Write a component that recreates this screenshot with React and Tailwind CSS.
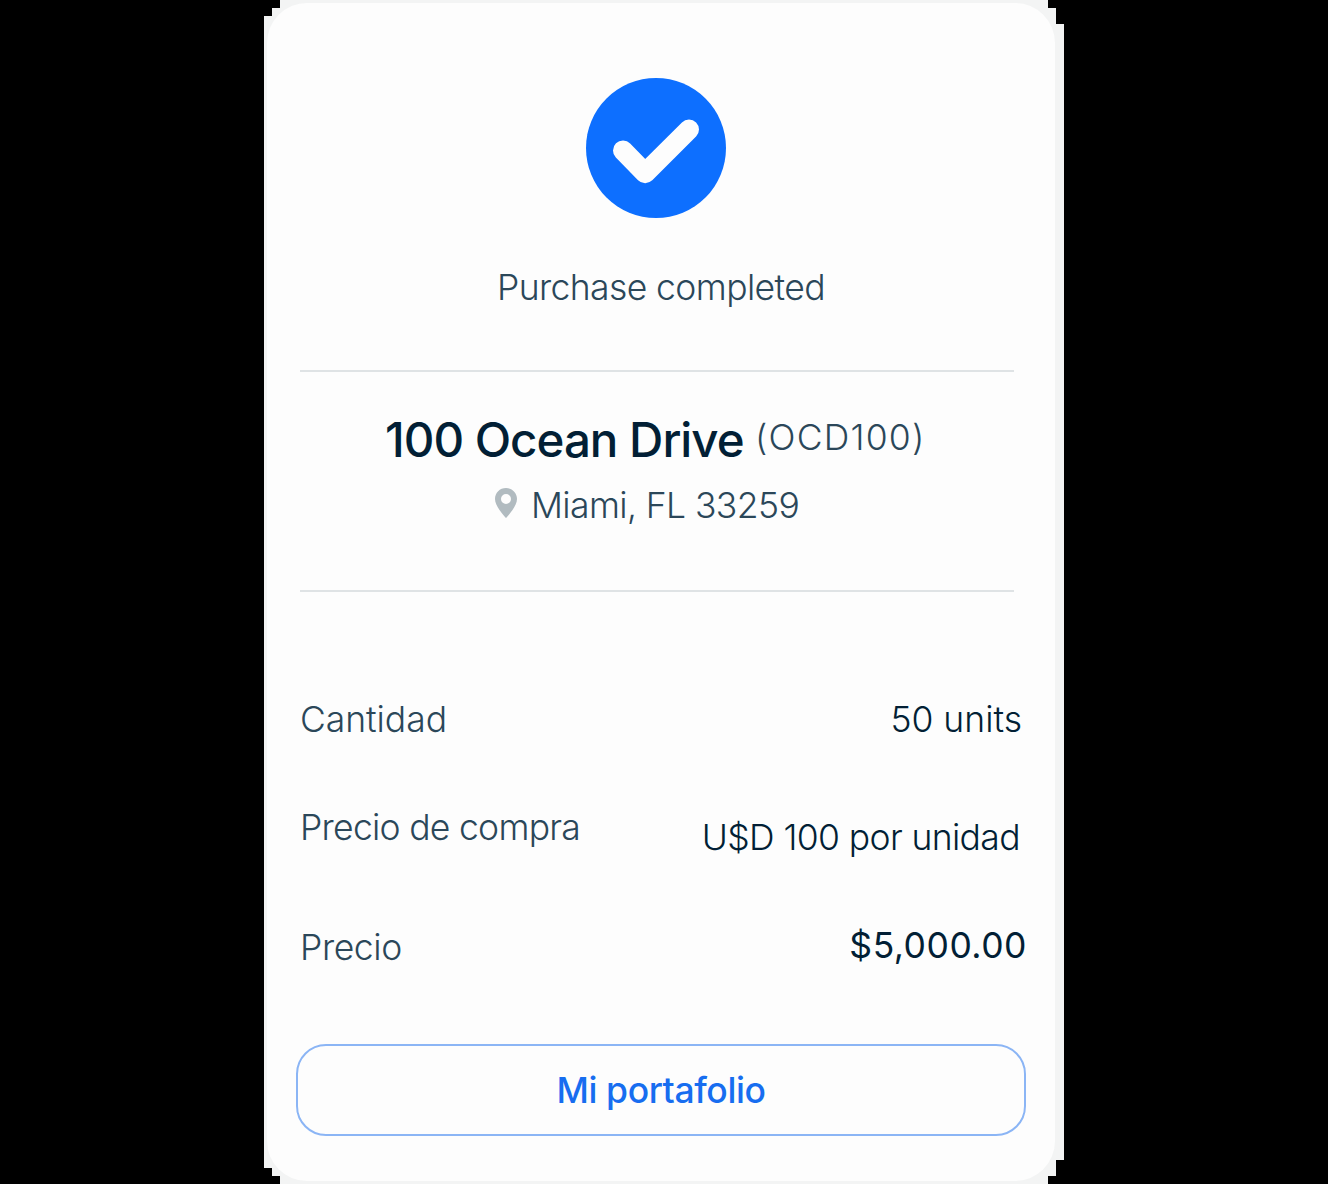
function CheckBadge() {
  return (
    <svg className="mt-[75px] ml-[319px] block h-[140px] w-[140px] shrink-0" viewBox="0 0 140 140" fill="none">
      <circle cx="70" cy="70" r="70" fill="#0d6fff" />
      <path d="M37 72.500L59.200 95.200L103 51.500" stroke="#fdfdfd" strokeWidth="20" strokeLinecap="round" strokeLinejoin="round" />
    </svg>
  );
}

function Pin() {
  return (
    <svg className="mt-[3px] h-[30px] w-[22px] shrink-0" viewBox="0 0 22 30">
      <path fillRule="evenodd" fill="#b1bbc0" d="M11 0C4.800 0 0 4.900 0 11c0 7.800 11 19 11 19s11-11.200 11-19C22 4.900 17.200 0 11 0Zm0 6a5 5 0 1 1 0 10a5 5 0 0 1 0-10Z" />
    </svg>
  );
}

export default function App() {
  return (
    <main className="h-[1184px] w-[1328px] overflow-hidden bg-black pl-[264px] font-['Inter',sans-serif]">
      <div className="h-[1184px] w-[800px] overflow-hidden bg-[#f3f4f4] pt-[3px] pl-[3px] [clip-path:polygon(16px_0,784px_0,784px_8px,792px_8px,792px_24px,800px_24px,800px_1160px,792px_1160px,792px_1176px,784px_1176px,784px_1184px,16px_1184px,16px_1176px,8px_1176px,8px_1168px,0_1168px,0_16px,8px_16px,8px_8px,16px_8px)]">
        <section className="flex h-[1178px] w-[788px] flex-col rounded-[40px] bg-[#fdfdfd] text-[35.5px] leading-[40px] font-light whitespace-nowrap text-[#2b4759]">
          <CheckBadge />
          <p className="mt-[50px] ml-[230px] tracking-[-0.6px]">Purchase completed</p>
          <div className="mt-[62px] ml-[33px] h-[2px] w-[714px] shrink-0 bg-[#dfe3e5]" />
          <div className="mt-[40px] ml-[118px] flex h-[56px] items-start">
            <h1 className="w-[370px] text-[47.5px] leading-[56px] font-medium tracking-[-1px] text-[#021f35]">100 Ocean Drive</h1>
            <span className="mt-[6px] tracking-[1.2px]">(OCD100)</span>
          </div>
          <div className="mt-[17px] ml-[228px] flex h-[40px] items-start gap-[14px]">
            <Pin />
            <span className="mt-px tracking-[-0.6px]">Miami, FL 33259</span>
          </div>
          <div className="mt-[65px] ml-[33px] h-[2px] w-[714px] shrink-0 bg-[#dfe3e5]" />
          <dl className="mt-[108px] ml-[33px] flex h-[344px] w-[727px] flex-col">
            <div className="flex h-[108px] justify-between">
              <dt className="tracking-[-0.05px]">Cantidad</dt>
              <dd className="mr-[5px] text-[#021f35]">50 units</dd>
            </div>
            <div className="flex h-[118px] justify-between">
              <dt className="tracking-[-0.72px]">Precio de compra</dt>
              <dd className="mt-[10px] mr-[7px] tracking-[-0.62px] text-[#021f35]">U$D 100 por unidad</dd>
            </div>
            <div className="flex justify-between">
              <dt className="mt-[2px] tracking-[-0.4px]">Precio</dt>
              <dd className="font-normal tracking-[0.5px] text-[#021f35]">$5,000.00</dd>
            </div>
          </dl>
          <button className="ml-[29px] flex h-[92px] w-[730px] shrink-0 items-center justify-center rounded-[30px] border-2 border-[#8bb5f5] pt-[2px] font-medium tracking-[-0.4px] text-[#176df0]">
            Mi portafolio
          </button>
        </section>
      </div>
    </main>
  );
}
